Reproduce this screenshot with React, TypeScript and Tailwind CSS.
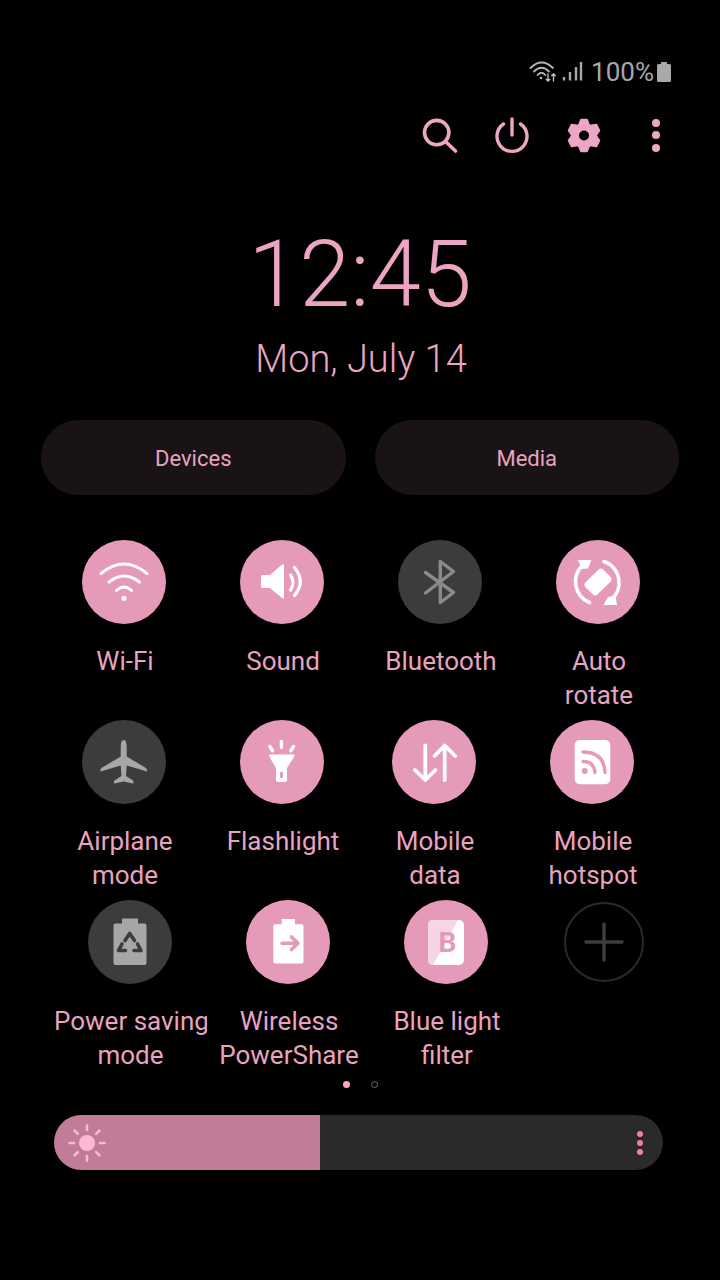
import type { ReactNode } from "react";

const W = "#ffffff";
const PINK = "#e59ab9";
const OFF = "#a6a6a6";

function Glyph({ children }: { children: ReactNode }) {
  return (
    <svg viewBox="0 0 84 84" className="h-[84px] w-[84px]" fill="none" strokeLinecap="round" strokeLinejoin="round">
      {children}
    </svg>
  );
}

const icons: Record<string, ReactNode> = {
  wifi: (
    <g stroke={W} strokeWidth="3">
      <path d="M19 33.5Q42 14.5 65 33.5" />
      <path d="M27 42Q42 30 57.5 42" />
      <path d="M34.5 50.5Q42 43.5 49.5 50.5" />
      <circle cx="42" cy="58.3" r="1.8" fill={W} strokeWidth="1.5" />
    </g>
  ),
  sound: (
    <g>
      <path d="M21 36.5Q21 35 23 35H30L42 24.5Q44 23 44 25.5V57Q44 59.5 42 58L30 48H23Q21 48 21 46.5Z" fill={W} />
      <path d="M50.5 35Q55.5 42.5 50.5 50" stroke={W} strokeWidth="3.2" />
      <path d="M54.5 27.5Q66 41.5 54.5 55.5" stroke={W} strokeWidth="3.2" />
    </g>
  ),
  bluetooth: (
    <path d="M27.5 32.5L55.5 52.5L42.3 62.5V21.5L55.5 31.5L27.5 53" stroke="#8a8a8a" strokeWidth="3.4" />
  ),
  rotate: (
    <g>
      <path d="M27 25A22.5 22.5 0 0 0 33.5 62.5" stroke={W} strokeWidth="3.6" />
      <path d="M48 21.5A22.5 22.5 0 0 1 55 60" stroke={W} strokeWidth="3.6" />
      <path d="M22 20H35.5L32 28.5L26 29Z" fill={W} />
      <path d="M47.5 65H61L59.5 56L52 57Z" fill={W} />
      <rect x="33.5" y="29.5" width="17" height="25" rx="3.5" fill={W} transform="rotate(45 42 42)" />
    </g>
  ),
  plane: (
    <path
      d="M41.7 20Q44.7 20 44.7 27V36.5L64 48Q65.5 49.5 65 51.5L44.7 45.5L44 56L51 60.5Q52 63.5 51 63.5L41.7 61.5L32.5 63.5Q31.5 63.5 32.4 60.5L39.4 56L38.7 45.5L18.5 51.5Q18 49.5 19.5 48L38.7 36.5V27Q38.7 20 41.7 20Z"
      fill={OFF}
    />
  ),
  flashlight: (
    <g>
      <path d="M41.4 21.5V27.5M29.8 26.5L32.6 30.8M53.6 26.5L50.8 30.8" stroke={W} strokeWidth="3.4" />
      <path fillRule="evenodd" d="M29 34.5H54.5L54 37L47 48V60Q47 62 45 62H38Q36 62 36 60V48L29.5 37ZM41.4 51.5Q40 51.5 40 53V56.5Q40 58 41.4 58Q43 58 43 56.5V53Q43 51.5 41.4 51.5Z" fill={W} />
    </g>
  ),
  data: (
    <g stroke={W} strokeWidth="3.8">
      <path d="M33.3 25.5V60M23 50L33.3 60L43.5 50" />
      <path d="M52.7 60V25.5M42.5 36L52.7 25.5L63.2 36" />
    </g>
  ),
  hotspot: (
    <g>
      <rect x="24.7" y="20" width="35.6" height="44.3" rx="5" fill={W} />
      <circle cx="34.7" cy="51" r="3" fill={PINK} />
      <path d="M33 41.5Q44 41.5 45 52.5" stroke={PINK} strokeWidth="3.4" />
      <path d="M33 32Q54 32 55 52.5" stroke={PINK} strokeWidth="3.4" />
    </g>
  ),
  saving: (
    <g>
      <path d="M34 18.5H50V23.5H56.5Q58.5 23.5 58.5 25.5V63Q58.5 65 56.5 65H27.5Q25.5 65 25.5 63V25.5Q25.5 23.5 27.5 23.5H34Z" fill={OFF} />
      <path d="M37 40.5L41.7 33.5L46.5 40.5M49.5 44L53 50.5H46M37.5 50.5H30.5L34 44" stroke="#3c3c3c" strokeWidth="3.6" />
    </g>
  ),
  share: (
    <g>
      <path d="M35.7 19H49V24.3H55.5Q57.5 24.3 57.5 26.3V61.5Q57.5 63.5 55.5 63.5H29.3Q27.3 63.5 27.3 61.5V26.3Q27.3 24.3 29.3 24.3H35.7Z" fill={W} />
      <path d="M36 43.3H51.5M45.5 37L52 43.3L45.5 49.5" stroke={PINK} strokeWidth="3.6" />
    </g>
  ),
  bluelight: (
    <g>
      <rect x="24" y="20" width="36" height="45" rx="5" fill={W} />
      <path d="M29 20H54L29 65Q24 65 24 60V25Q24 20 29 20Z" fill="#f6d6e3" />
      <text x="43.5" y="51.7" textAnchor="middle" fontFamily="Roboto" fontWeight="700" fontSize="28" fill={PINK}>
        B
      </text>
    </g>
  ),
};

interface Tile {
  label: string[];
  icon: string;
  on: boolean;
  cls?: string;
  labelCls?: string;
}

const rows: { cls: string; tiles: Tile[] }[] = [
  {
    cls: "pl-[47px]",
    tiles: [
      { label: ["Wi-Fi"], icon: "wifi", on: true },
      { label: ["Sound"], icon: "sound", on: true },
      { label: ["Bluetooth"], icon: "bluetooth", on: false },
      { label: ["Auto", "rotate"], icon: "rotate", on: true },
    ],
  },
  {
    cls: "pl-[47px]",
    tiles: [
      { label: ["Airplane", "mode"], icon: "plane", on: false },
      { label: ["Flashlight"], icon: "flashlight", on: true },
      { label: ["Mobile", "data"], icon: "data", on: true, cls: "ml-[-6px]" },
      { label: ["Mobile", "hotspot"], icon: "hotspot", on: true },
    ],
  },
  {
    cls: "pl-[53px]",
    tiles: [
      { label: ["Power saving", "mode"], icon: "saving", on: false, labelCls: "pl-px" },
      { label: ["Wireless", "PowerShare"], icon: "share", on: true },
      { label: ["Blue light", "filter"], icon: "bluelight", on: true },
    ],
  },
];

function QuickTile({ tile }: { tile: Tile }) {
  return (
    <div className={`flex w-[154px] flex-col items-center overflow-hidden ${tile.cls ?? ""}`}>
      <div className={`h-[84px] w-[84px] rounded-full ${tile.on ? "bg-[#e59ab9]" : "bg-[#3c3c3c]"}`}>
        <Glyph>{icons[tile.icon]}</Glyph>
      </div>
      <div className={`mt-5 w-[154px] text-center text-[26px] leading-[34px] whitespace-nowrap text-[#e8a3c0] ${tile.labelCls ?? "pl-0.5"}`}>
        {tile.label.map((l) => (
          <div key={l}>{l}</div>
        ))}
      </div>
    </div>
  );
}

function StatusIcons() {
  return (
    <svg viewBox="0 0 54 24" className="mr-2 h-6 w-[54px]" fill="none" strokeLinecap="round">
      <path d="M1.5 8Q12.5 -3 24 8" stroke="#b5b5b5" strokeWidth="1.8" />
      <path d="M5 11.5Q12.5 4 20 11.5" stroke="#b5b5b5" strokeWidth="1.8" />
      <path d="M8.5 15Q12.5 10.5 16.5 15" stroke="#b5b5b5" strokeWidth="1.8" />
      <circle cx="12" cy="18" r="1.3" fill="#b5b5b5" />
      <path d="M19 14V21M17.2 19.2L19 21L20.8 19.2" stroke="#c8c8c8" strokeWidth="1.3" />
      <path d="M24.5 21V14M22.7 15.8L24.5 14L26.3 15.8" stroke="#c8c8c8" strokeWidth="1.3" />
      <path d="M35 17V20.5M41 12V20.5M47 7V20.5M52 2V20.5" stroke="#a8a8a8" strokeWidth="2.4" strokeLinecap="butt" />
    </svg>
  );
}

export default function App() {
  return (
    <div className="flex h-[1280px] w-[720px] flex-col overflow-hidden bg-black font-['Roboto',sans-serif]">
      {/* status bar */}
      <div className="mt-[52px] flex h-10 items-center justify-end pr-[49px]">
        <StatusIcons />
        <span className="text-[26px] leading-10 text-[#a8a8a8]">100%</span>
        <svg viewBox="0 0 14 20" className="ml-[3px] h-5 w-[14px]">
          <path d="M4 0H10V2H12.5Q14 2 14 3.5V18.5Q14 20 12.5 20H1.5Q0 20 0 18.5V3.5Q0 2 1.5 2H4Z" fill="#a8a8a8" />
        </svg>
      </div>

      {/* header actions */}
      <div className="mt-[19px] flex h-12 justify-end pr-[28px]">
        <div className="flex w-[72px] items-center justify-center">
          <svg viewBox="0 0 48 48" className="h-12 w-12" fill="none" stroke="#eda6c5" strokeWidth="3.6" strokeLinecap="round">
            <circle cx="20.7" cy="21.6" r="12.2" />
            <path d="M30 31L39.5 40" />
          </svg>
        </div>
        <div className="flex w-[72px] items-center justify-center">
          <svg viewBox="0 0 48 48" className="h-12 w-12" fill="none" stroke="#eda6c5" strokeWidth="3.4" strokeLinecap="round">
            <path d="M15.5 13A15 15 0 1 0 32.5 13" />
            <path d="M24 8V24" />
          </svg>
        </div>
        <div className="flex w-[72px] items-center justify-center">
          <svg viewBox="0 0 48 48" className="h-12 w-12">
            <path
              fillRule="evenodd"
              fill="#eda6c5"
              stroke="#eda6c5"
              strokeWidth="1.6"
              strokeLinejoin="round"
              d="M21 8.5H27L29.5 14.5L36.5 13.5L39.5 19.5L36 24.5L39.5 29.5L36.5 35.5L29.5 34.5L27 40.5H21L18.5 34.5L11.5 35.5L8.5 29.5L12 24.5L8.5 19.5L11.5 13.5L18.5 14.5ZM24 18.7A5.8 5.8 0 1 0 24 30.3A5.8 5.8 0 1 0 24 18.7Z"
            />
          </svg>
        </div>
        <div className="flex w-[72px] flex-col items-center justify-center gap-[4.5px]">
          <div className="h-2 w-2 rounded-full bg-[#eda6c5]" />
          <div className="h-2 w-2 rounded-full bg-[#eda6c5]" />
          <div className="h-2 w-2 rounded-full bg-[#eda6c5]" />
        </div>
      </div>

      {/* clock */}
      <div className="mt-[66px] text-center text-[92px] leading-[100px] font-light text-[#eba5c3]">12:45</div>
      <div className="mt-[9px] pl-0.5 text-center text-[38px] leading-[50px] font-light text-[#eba5c3]">Mon, July 14</div>

      {/* devices / media */}
      <div className="mt-9 flex gap-[29px] pr-[41px] pl-[41px]">
        <div className="flex h-[75px] flex-1 items-center justify-center rounded-full bg-[#1a1316] pt-px text-[22px] text-[#e8a3c0]">
          Devices
        </div>
        <div className="flex h-[75px] flex-1 items-center justify-center rounded-full bg-[#1a1316] pt-px text-[22px] text-[#e8a3c0]">
          Media
        </div>
      </div>

      {/* quick tiles */}
      <div className="mt-[45px] flex flex-col">
        {rows.map((row, i) => (
          <div key={i} className={`flex h-[180px] gap-1 ${row.cls}`}>
            {row.tiles.map((t) => (
              <QuickTile key={t.icon} tile={t} />
            ))}
            {i === 2 && (
              <div className="flex h-[84px] w-[154px] items-center justify-center">
                <div className="flex h-[80px] w-[80px] items-center justify-center rounded-full border-2 border-[#2a2a2a]">
                  <svg viewBox="0 0 40 40" className="h-10 w-10" stroke="#3d3d3d" strokeWidth="3.4" strokeLinecap="round">
                    <path d="M20 2V38M2 20H38" />
                  </svg>
                </div>
              </div>
            )}
          </div>
        ))}
      </div>

      {/* pager */}
      <div className="flex h-2 justify-center gap-[21px] pt-px">
        <div className="h-[7px] w-[7px] rounded-full bg-[#f7a9cb]" />
        <div className="h-[7px] w-[7px] rounded-full border border-[#8a6474]" />
      </div>

      {/* brightness */}
      <div className="mt-[27px] ml-[54px] flex h-[55px] w-[609px] overflow-hidden rounded-full bg-[#2a2a2a]">
        <div className="flex h-full w-[266px] items-center bg-[#c07c98] pl-[13px]">
          <svg viewBox="0 0 40 40" className="h-10 w-10" stroke="#fcb8d4" strokeWidth="2.6" strokeLinecap="round">
            <circle cx="20" cy="20" r="8" fill="#fcb8d4" stroke="none" />
            <path d="M20 2.5V7M20 33V37.5M2.5 20H7M33 20H37.5M7.6 7.6L10.8 10.8M29.2 29.2L32.4 32.4M7.6 32.4L10.8 29.2M29.2 10.8L32.4 7.6" />
          </svg>
        </div>
        <div className="flex flex-1 items-center justify-end pr-5">
          <div className="flex flex-col gap-[3px]">
            <div className="h-1.5 w-1.5 rounded-full bg-[#f07fae]" />
            <div className="h-1.5 w-1.5 rounded-full bg-[#f07fae]" />
            <div className="h-1.5 w-1.5 rounded-full bg-[#f07fae]" />
          </div>
        </div>
      </div>
    </div>
  );
}
